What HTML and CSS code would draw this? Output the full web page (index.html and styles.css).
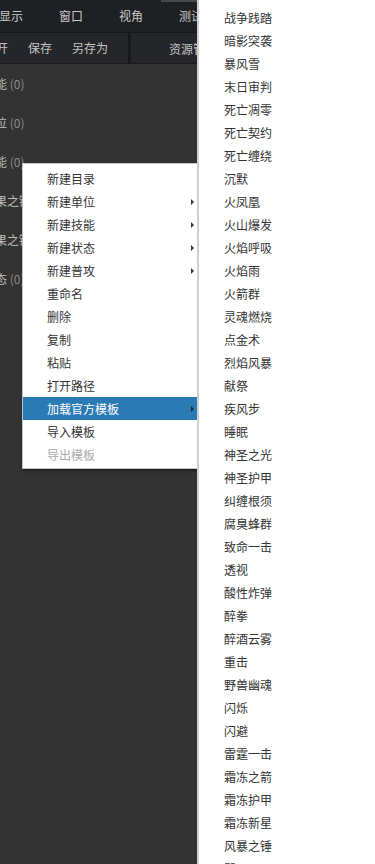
FILE: index.html
```html
<!DOCTYPE html>
<html lang="zh-CN">
<head>
    <meta charset="UTF-8">
    <meta name="viewport" content="width=device-width, initial-scale=1.0">
    <title>编辑器 - 资源管理器</title>
    <link rel="stylesheet" href="styles.css">
</head>
<body>
    <div class="app">
        <!-- Top menu bar -->
        <div class="menubar">
            <span class="menu-item">显示</span>
            <span class="menu-item">窗口</span>
            <span class="menu-item">视角</span>
            <span class="menu-item active">测试</span>
        </div>

        <!-- Toolbar -->
        <div class="toolbar">
            <div class="tool-group">
                <span class="tool">打开</span>
                <span class="tool">保存</span>
                <span class="tool">另存为</span>
            </div>
            <div class="tool-sep"></div>
            <div class="panel-title">资源管理器</div>
        </div>

        <!-- Resource tree -->
        <ul class="tree">
            <li class="tree-item"><span class="name">技能</span> <span class="count">(0)</span></li>
            <li class="tree-item"><span class="name">单位</span> <span class="count">(0)</span></li>
            <li class="tree-item"><span class="name">技能</span> <span class="count">(0)</span></li>
            <li class="tree-item"><span class="name">效果之链</span> <span class="count">(0)</span></li>
            <li class="tree-item"><span class="name">效果之链</span> <span class="count">(0)</span></li>
            <li class="tree-item"><span class="name">状态</span> <span class="count">(0)</span></li>
        </ul>

        <!-- Right-click menu -->
        <ul class="context-menu">
            <li>新建目录</li>
            <li class="has-sub">新建单位</li>
            <li class="has-sub">新建技能</li>
            <li class="has-sub">新建状态</li>
            <li class="has-sub">新建普攻</li>
            <li>重命名</li>
            <li>删除</li>
            <li>复制</li>
            <li>粘贴</li>
            <li>打开路径</li>
            <li class="has-sub selected">加载官方模板</li>
            <li>导入模板</li>
            <li class="disabled">导出模板</li>
        </ul>

        <!-- Official template submenu -->
        <ul class="submenu">
            <li>战争践踏</li>
            <li>暗影突袭</li>
            <li>暴风雪</li>
            <li>末日审判</li>
            <li>死亡凋零</li>
            <li>死亡契约</li>
            <li>死亡缠绕</li>
            <li>沉默</li>
            <li>火凤凰</li>
            <li>火山爆发</li>
            <li>火焰呼吸</li>
            <li>火焰雨</li>
            <li>火箭群</li>
            <li>灵魂燃烧</li>
            <li>点金术</li>
            <li>烈焰风暴</li>
            <li>献祭</li>
            <li>疾风步</li>
            <li>睡眠</li>
            <li>神圣之光</li>
            <li>神圣护甲</li>
            <li>纠缠根须</li>
            <li>腐臭蜂群</li>
            <li>致命一击</li>
            <li>透视</li>
            <li>酸性炸弹</li>
            <li>醉拳</li>
            <li>醉酒云雾</li>
            <li>重击</li>
            <li>野兽幽魂</li>
            <li>闪烁</li>
            <li>闪避</li>
            <li>雷霆一击</li>
            <li>霜冻之箭</li>
            <li>霜冻护甲</li>
            <li>霜冻新星</li>
            <li>风暴之锤</li>
            <li>飓风</li>
        </ul>
    </div>
</body>
</html>
```

FILE: styles.css
```css
body {
    margin: 0;
    padding: 0;
    background-color: #333;
    font-family: "Noto Sans CJK SC", sans-serif;
    font-size: 12px;
    overflow: hidden;
}

ul {
    list-style: none;
    margin: 0;
    padding: 0;
}

.app {
    position: relative;
    width: 375px;
    height: 864px;
    overflow: hidden;
}

/* Menu bar */
.menubar {
    display: flex;
    height: 32px;
    margin-left: -19px;
    background-color: #1f2023;
    white-space: nowrap;
}

.menu-item {
    padding: 0 18px;
    line-height: 32px;
    color: #c8c8c8;
}

.menu-item.active {
    box-shadow: inset 0 2px 0 #46474b;
}

/* Toolbar */
.toolbar {
    display: flex;
    align-items: center;
    height: 30px;
    border-top: 1px solid #17181a;
    border-bottom: 1px solid #1b1b1d;
    background-color: #25262a;
    white-space: nowrap;
}

.tool-group {
    display: flex;
    margin-left: -26px;
}

.tool {
    padding: 0 10px;
    line-height: 30px;
    color: #c4c4c4;
}

.tool-sep {
    width: 3px;
    height: 30px;
    margin-left: 10px;
    background-color: #191a1c;
}

.panel-title {
    margin-left: 38px;
    color: #c4c4c4;
}

/* Tree */
.tree {
    margin-left: -17px;
}

.tree-item {
    height: 39px;
    line-height: 39px;
    white-space: nowrap;
}

.tree-item .name {
    color: #bdbdbd;
}

.tree-item .count {
    color: #8a8a8a;
}

/* Context menu */
.context-menu {
    position: absolute;
    left: 22px;
    top: 163px;
    width: 175px;
    padding: 3px 0 2px;
    background-color: #fff;
    border: 1px solid #c4c4c4;
    box-shadow: 1px 2px 3px rgba(0, 0, 0, 0.45);
}

.context-menu li {
    position: relative;
    height: 23px;
    line-height: 23px;
    padding-left: 24px;
    color: #333;
}

.context-menu li.has-sub::after {
    content: "";
    position: absolute;
    right: 4px;
    top: 9px;
    border-left: 3px solid #333;
    border-top: 3px solid transparent;
    border-bottom: 3px solid transparent;
}

.context-menu li.selected {
    background-color: #2a7ab6;
    color: #fff;
}

.context-menu li.selected::after {
    border-left-color: #1d2630;
}

.context-menu li.disabled {
    color: #aaa;
}

/* Submenu */
.submenu {
    position: absolute;
    left: 197px;
    top: 0;
    width: 200px;
    padding-top: 6px;
    background-color: #fff;
    border-left: 2px solid #d0d0d0;
}

.submenu li {
    height: 23px;
    line-height: 23px;
    padding-left: 25px;
    color: #333;
}
```
